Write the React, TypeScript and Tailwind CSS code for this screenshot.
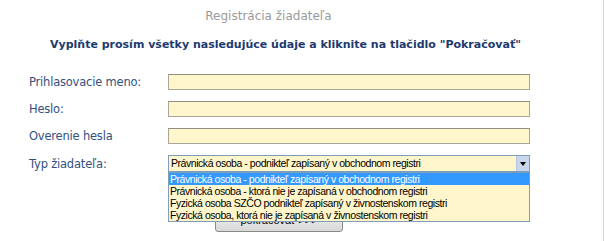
const fields = ["Prihlasovacie meno:", "Heslo:", "Overenie hesla"];

const options = [
  "Právnická osoba - podnikteľ zapísaný v obchodnom registri",
  "Právnická osoba - ktorá nie je zapísaná v obchodnom registri",
  "Fyzická osoba SZČO podnikteľ zapísaný v živnostenskom registri",
  "Fyzická osoba, ktorá nie je zapísaná v živnostenskom registri",
];

export default function App() {
  return (
    <div className="w-[604px] h-[241px] bg-white border-r border-[#d4d4d4] font-['DejaVu_Sans',sans-serif]">
      <div className="pt-[7px] text-center text-[12px] leading-[18px] text-[#9a9a9a] pr-[66px]">
        Registrácia žiadateľa
      </div>
      <div className="mt-[12px] pl-[50px] text-[11px] leading-[16px] font-bold text-[#1c3a70]">
        Vyplňte prosím všetky nasledujúce údaje a kliknite na tlačidlo "Pokračovať"
      </div>

      <div className="mt-[21px] pl-[29px] flex flex-col gap-[11px]">
        {fields.map((label) => (
          <div key={label} className="flex items-center">
            <span className="w-[139px] text-[11.5px] leading-[16px] tracking-[-0.2px] text-[#34507f]">{label}</span>
            <div className="w-[362px] h-[16px] bg-[#fff7cb] border border-[#a9a698] border-t-[#8f8c80]" />
          </div>
        ))}

        <div className="flex items-start">
          <span className="w-[139px] text-[11.5px] leading-[18px] tracking-[-0.2px] text-[#34507f]">Typ žiadateľa:</span>
          <div className="relative w-[362px]">
            <div className="h-[17px] bg-[#fff7cb] border border-[#7f9db9] flex items-center font-['Liberation_Sans',sans-serif] text-[10.5px] tracking-[-0.45px] text-black">
              <span className="flex-1 pl-[2px] whitespace-nowrap">{options[0]}</span>
              <div className="w-[13px] h-[15px] bg-[#c9d7ec] border-l border-[#b5c6e0] flex items-center justify-center">
                <div className="w-0 h-0 border-l-[3px] border-r-[3px] border-t-[4px] border-l-transparent border-r-transparent border-t-black" />
              </div>
            </div>

            <div className="mt-[38px] ml-[47px] w-[128px] h-[22px] rounded-[3px] border border-[#8a8a8a] bg-gradient-to-b from-[#f4f4f4] to-[#d8d8d8] flex items-end justify-center pb-[3px] text-[11px] font-['Liberation_Sans',sans-serif]">
              pokračovať &gt;&gt;&gt;
            </div>

            <div className="absolute left-0 top-[17px] w-[362px] bg-[#fff7cb] border border-[#7f9db9] font-['Liberation_Sans',sans-serif] text-[10.5px] tracking-[-0.45px] leading-[12px] text-black">
              {options.map((o, i) => (
                <div
                  key={o}
                  className={
                    i === 0
                      ? "pl-[1px] bg-[#3399ff] text-white whitespace-nowrap"
                      : "pl-[1px] whitespace-nowrap"
                  }
                >
                  {o}
                </div>
              ))}
            </div>
          </div>
        </div>
      </div>
    </div>
  );
}
